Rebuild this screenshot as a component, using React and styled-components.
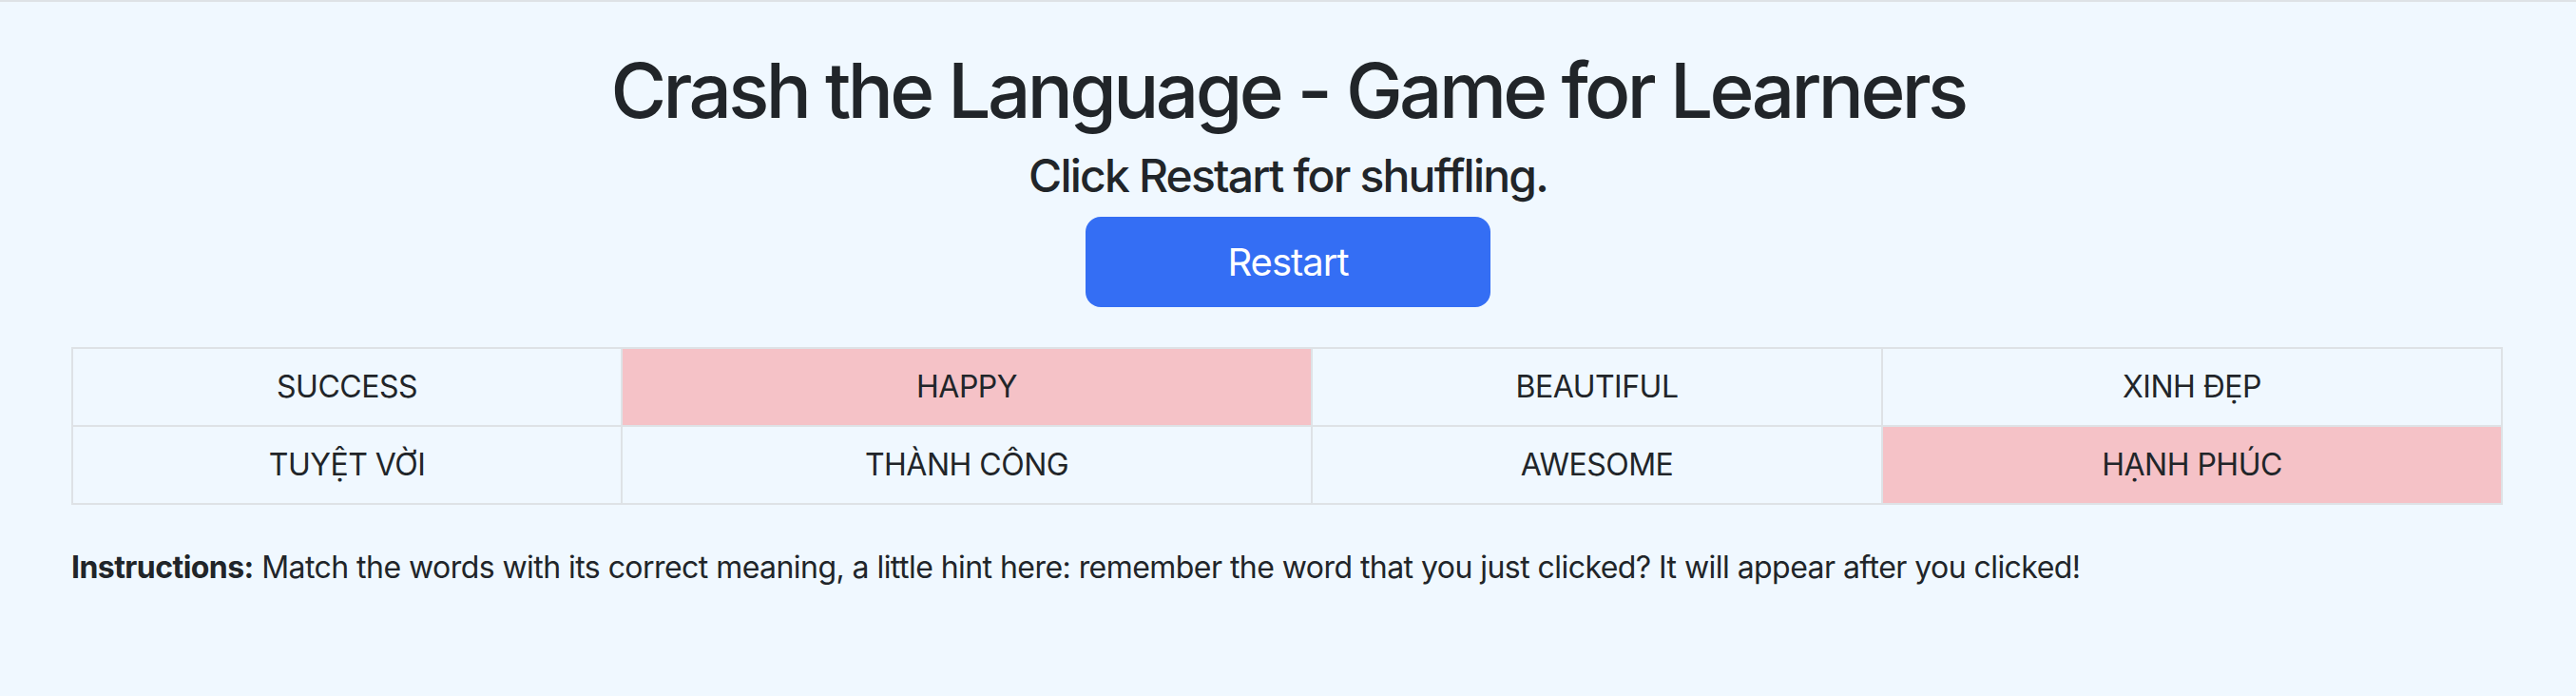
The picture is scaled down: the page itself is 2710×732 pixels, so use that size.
import React, { useState } from "react";
import styled, { createGlobalStyle } from "styled-components";

const GlobalStyle = createGlobalStyle`
  html, body {
    margin: 0;
    padding: 0;
    background: aliceblue;
  }
  body {
    font-family: Inter, "Noto Sans", "Liberation Sans", sans-serif;
    color: #212529;
    -webkit-font-smoothing: antialiased;
  }
  * {
    box-sizing: border-box;
  }
`;

const Page = styled.main`
  min-height: 732px;
  border-top: 2px solid #dee2e6;
  padding: 45px 75px 0;
  display: flex;
  flex-direction: column;
  align-items: flex-start;
`;

const Header = styled.header`
  align-self: stretch;
  display: flex;
  flex-direction: column;
  align-items: center;
`;

const Title = styled.h1`
  margin: 0 0 13px;
  font-size: 80px;
  font-weight: 500;
  line-height: 1.2;
  letter-spacing: -3.6px;
`;

const Subtitle = styled.h4`
  margin: 0 0 14px;
  font-size: 48px;
  font-weight: 500;
  line-height: 1.2;
  letter-spacing: -1.8px;
`;

const RestartButton = styled.button`
  width: 426px;
  height: 95px;
  border: none;
  border-radius: 16px;
  background: #346ef4;
  color: #fff;
  font-family: inherit;
  font-size: 40px;
  font-weight: 400;
  letter-spacing: -1px;
  cursor: pointer;

  &:hover {
    background: #2a5fdb;
  }
`;

const Board = styled.div`
  margin-top: 42px;
  display: grid;
  grid-template-columns: 578px 726px 600px 652px;
  border-top: 2px solid #dee2e6;
  border-left: 2px solid #dee2e6;
`;

const Cell = styled.div`
  height: 82px;
  display: flex;
  align-items: center;
  justify-content: center;
  border-right: 2px solid #dee2e6;
  border-bottom: 2px solid #dee2e6;
  background: ${(p) => (p.$picked ? "#f5c2c7" : "transparent")};
  font-size: 32px;
  line-height: 1.5;
  letter-spacing: -0.5px;
  cursor: pointer;
  user-select: none;
`;

const Instructions = styled.p`
  margin: 42px 0 0;
  font-size: 32px;
  line-height: 1.5;
  letter-spacing: -0.55px;
`;

const words = [
  "SUCCESS",
  "HAPPY",
  "BEAUTIFUL",
  "XINH ĐẸP",
  "TUYỆT VỜI",
  "THÀNH CÔNG",
  "AWESOME",
  "HẠNH PHÚC",
];

export default function App() {
  const [picked, setPicked] = useState(["HAPPY", "HẠNH PHÚC"]);

  function toggle(word) {
    setPicked((prev) =>
      prev.includes(word) ? prev.filter((w) => w !== word) : [...prev, word]
    );
  }

  return (
    <>
      <GlobalStyle />
      <Page>
        <Header>
          <Title>Crash the Language - Game for Learners</Title>
          <Subtitle>Click Restart for shuffling.</Subtitle>
          <RestartButton onClick={() => setPicked([])}>Restart</RestartButton>
        </Header>
        <Board>
          {words.map((w) => (
            <Cell key={w} $picked={picked.includes(w)} onClick={() => toggle(w)}>
              {w}
            </Cell>
          ))}
        </Board>
        <Instructions>
          <strong>Instructions:</strong> Match the words with its correct
          meaning, a little hint here: remember the word that you just clicked?
          It will appear after you clicked!
        </Instructions>
      </Page>
    </>
  );
}
